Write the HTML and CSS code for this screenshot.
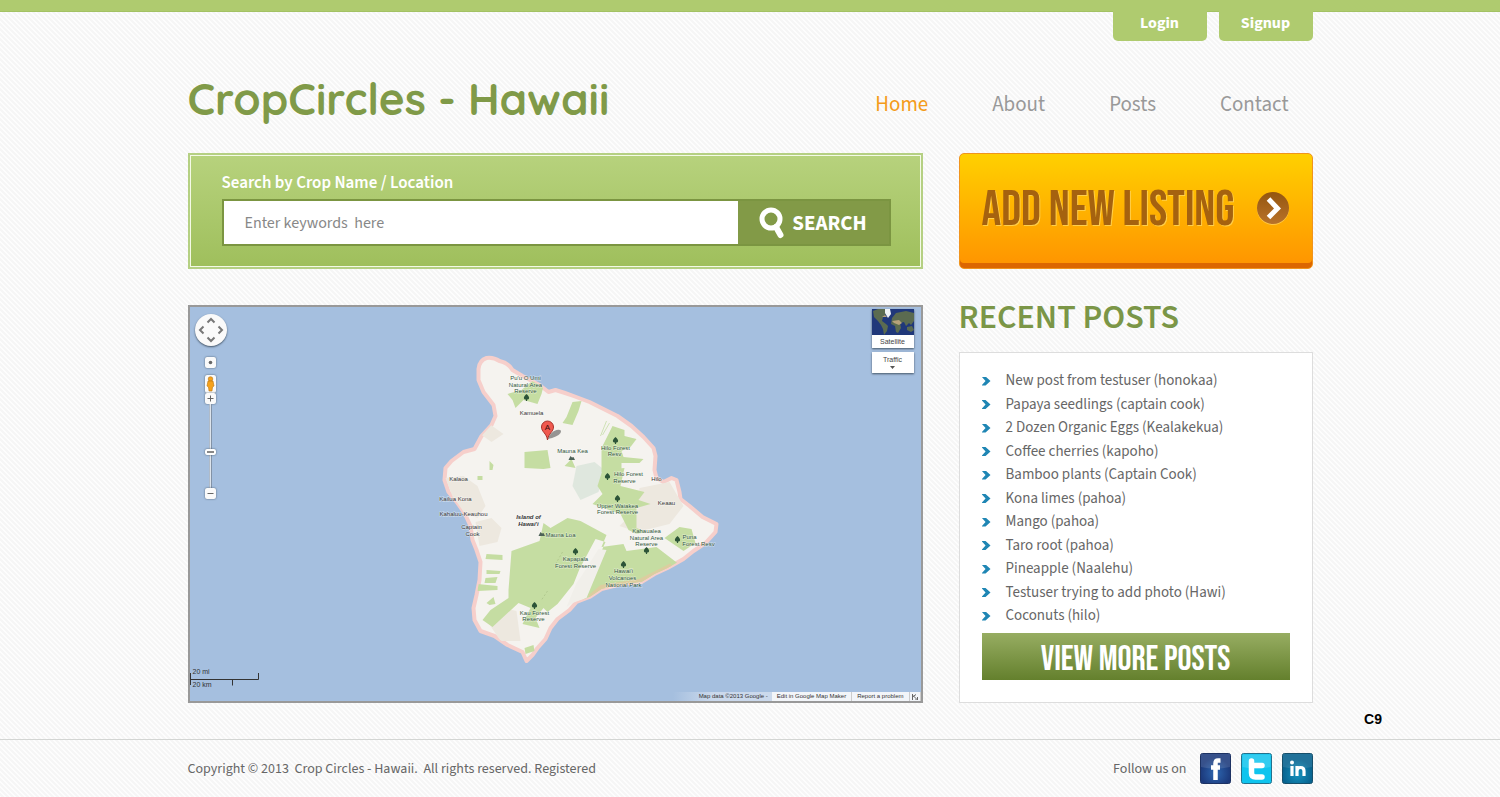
FILE: index.html
```html
<!DOCTYPE html>
<html lang="en">
<head>
  <meta charset="UTF-8">
  <title>CropCircles - Hawaii</title>
  <meta name="viewport" content="width=device-width, initial-scale=1.0">
  <link rel="stylesheet" href="styles.css">
</head>
<body>
  <div class="topbar"></div>
  <header class="container">
    <div class="account">
      <a href="#login">Login</a>
      <a href="#signup">Signup</a>
    </div>
    <div class="masthead">
      <h1>CropCircles - Hawaii</h1>
      <nav>
        <a class="active" href="#home">Home</a>
        <a href="#about">About</a>
        <a href="#posts">Posts</a>
        <a href="#contact">Contact</a>
      </nav>
    </div>
  </header>

  <main class="container">
    <form class="search">
      <label for="keywords">Search by Crop Name / Location</label>
      <div class="search-row">
        <input type="text" id="keywords" placeholder="Enter keywords&nbsp; here">
        <button type="submit">
          <svg width="26" height="32" viewBox="0 0 26 32"><circle cx="12" cy="12" r="9" fill="none" stroke="#fff" stroke-width="5"/><path d="M17 20l4.500 8" stroke="#fff" stroke-width="6" stroke-linecap="round"/></svg>
          SEARCH
        </button>
      </div>
    </form>

    <a class="add-listing" href="#add">
      <span>ADD NEW LISTING</span>
      <svg width="34" height="34" viewBox="0 0 34 34">
        <defs><linearGradient id="disc" x1="0" y1="0" x2="0" y2="1"><stop offset="0" stop-color="#94560f"/><stop offset="1" stop-color="#b9722a"/></linearGradient></defs>
        <circle cx="17" cy="18" r="16" fill="#ffc846"/>
        <circle cx="17" cy="17" r="16" fill="url(#disc)"/>
        <path d="M12.500 8l9 9.500-9 9" fill="none" stroke="#fff" stroke-width="5"/>
      </svg>
    </a>

    <section class="map">
      <svg class="map-canvas" viewBox="190 307 732 394" preserveAspectRatio="xMidYMid slice">
        <defs>
          <path id="tree" d="M0-4c2 2 3 3 2.500 4.500C2.200 1.500 1 1.500.6 1.400V3h-1.200V1.400C-1 1.500-2.200 1.500-2.500.5-3-1-2-2 0-4z" fill="#2c5438"/>
          <path id="peak" d="M-3 2l2-4 1.500 1.500L2-1l1.500 3z" fill="#4d6257"/>
          <path id="island" d="M479 369Q480 360 487 358Q494 357 500 361Q509 363 513 370L523 376 540 385 549 392 556 390Q566 393 574 396L590 402 604 409 618 416 632 426 644 437 654 448 656 456 655 470 657 478 664 482 672 478 677 480 680 492 681 499 690 506 703 517 717 524 716 532 706 543 694 551 684 559 668 568 655 574 642 582 622 584 602 589 590 597 577 602 570 610 558 619 551 628 546 639 538 648 533 655 527 661 523 652 508 645 495 636 481 631 475 620 474 608 477 595 480 580 481 562 477 550 473 540 471 526 465 513 458 503 449 492 445 480 446 468 452 461 464 452 475 449 482 436 492 425 496 416 494 405 484 392 479 380z"/>
          <clipPath id="coast"><use href="#island"/></clipPath>
        </defs>
        <rect x="-400" y="-200" width="2000" height="1400" fill="#a5bfdf"/>
        <use href="#island" fill="#f5f3ef" stroke="#f6cfcb" stroke-width="4" stroke-linejoin="round"/>
        <g clip-path="url(#coast)">
          <g fill="#ede8df">
            <path d="M446 478l18-2 14 10 8 20-8 12-20-8z"/>
            <path d="M476 522l16-4 10 10-4 14-18 4z"/>
            <path d="M478 432l12-8 14 10-12 8z"/>
            <path d="M505 608l12 3 4 30-20 0-12-18z"/>
            <path d="M640 488l30-6 14 24-14 18-32 8-18-6 18-18z"/>
          </g>
          <path d="M577 466l18-4 10 8-6 22-18 8-8-14z" fill="#dfe7de"/>
          <g fill="#c5dda2">
            <path d="M508 394l14-4 12-10 10 6-2 8-4 10-14-4-8 8-3-8z"/>
            <path d="M573 402l9-1-3 10-6 14-10-2 4-6z"/>
            <path d="M525 452l23-2 3 18-7 1-19-1z"/>
            <path d="M548 452l2 16-9-4zM565 466l7-7 4 9zM478 476h5v4h-5zM490 461l4 4-1 5h-3z"/>
            <path d="M613 426l12 4 0 6 12 3-6 8-9 4 2 6 20 2-4 4-18 0 0 9-20 0 0-24 6-12z"/>
            <path d="M603 470l22-2-4 18 24 6-6 8 12 4-14 4 0 20 10 4-10 2-8-4-8-16-28-10 10-10-5-8z"/>
            <path d="M512 551l28-10 4-18 7 5 17-10 13 3 26 14-5 12 22-3 3 7 30-4 26 20-14 10-15 8-70 15 0-8 22-50-10-3-16 30-6 15-16 20-10 8-4-4-8 10 4 10-17-4 8-16-12-5-26 24-10-7 8-10 18-12 0-8z"/>
            <path d="M665 538l15-11 12 2 4 14-12 8z"/>
            <path d="M487 554l16 1v5l-17-1zM487 570l14 1-1 3h-13zM486 578l12-1-2 6h-11zM478 584l20 2v4l-20 1zM487 603l7-6 2 7-6 1zM525 648l9-3 1 6-9 3z"/>
          </g>
          <path d="M590 597l12-10 38-6 32-16" fill="none" stroke="#dccd9f" stroke-width="4"/>
          <path d="M599 549l8 1-20 48-14 5-6 4 10-24 5-7z" fill="#f1efea"/>
          <path d="M607 421l-6 15m9-13l-7 12" stroke="#cfe2b6"/>
          <path d="M548 591l-6 9m21-48l-8 14m60 6l16-1" stroke="#b2c98f" stroke-dasharray="2 2"/>
        </g>
        <g class="park">
          <text x="526" y="380">Pu'u O Umi</text><text x="526" y="387">Natural Area</text><text x="526" y="393">Reserve</text>
          <text x="573" y="453">Mauna Kea</text>
          <text x="616" y="450">Hilo Forest</text><text x="615" y="456">Resv</text>
          <text x="629" y="476">Hilo Forest</text><text x="625" y="483">Reserve</text>
          <text x="618" y="508">Upper Waiakea</text><text x="618" y="514">Forest Reserve</text>
          <text x="647" y="533">Kahaualea</text><text x="647" y="540">Natural Area</text><text x="647" y="546">Reserve</text>
          <text x="690" y="539">Puna</text><text x="699" y="546">Forest Resv</text>
          <text x="561" y="537">Mauna Loa</text>
          <text x="576" y="561">Kapapala</text><text x="576" y="568">Forest Reserve</text>
          <text x="624" y="573">Hawai'i</text><text x="623" y="580">Volcanoes</text><text x="624" y="587">National Park</text>
          <text x="535" y="615">Kau Forest</text><text x="534" y="621">Reserve</text>
        </g>
        <g class="town">
          <text x="532" y="415">Kamuela</text><text x="459" y="481">Kalaoa</text><text x="456" y="501">Kailua Kona</text>
          <text x="464" y="516">Kahaluu-Keauhou</text><text x="472" y="529">Captain</text><text x="473" y="536">Cook</text>
          <text x="657" y="481">Hilo</text><text x="667" y="505">Keaau</text>
          <text class="isle" x="529" y="519">Island of</text><text class="isle" x="529" y="526">Hawai'i</text>
        </g>
        <use href="#tree" x="527" y="398"/><use href="#tree" x="616" y="441"/><use href="#tree" x="608" y="477"/>
        <use href="#tree" x="618" y="499"/><use href="#tree" x="678" y="540"/><use href="#tree" x="576" y="552"/>
        <use href="#tree" x="624" y="565"/><use href="#tree" x="535" y="606"/><use href="#tree" x="647" y="551"/>
        <use href="#peak" x="572" y="458"/><use href="#peak" x="542" y="534"/>
        <path d="M548 439q3-7 9-9 6-1 4 3-3 4-13 6z" fill="#555" opacity=".6"/>
        <path d="M548 440c-1-7-6-8-6-13a6 6 0 0 1 12 0c0 5-5 6-6 13z" fill="#f0594f" stroke="#a8322c"/>
        <text class="pin" x="548" y="430">A</text>
      </svg>

      <div class="map-controls">
        <button class="pan" aria-label="Pan map"><svg width="32" height="32" viewBox="0 0 32 32"><path d="M12.500 8.500L16 5l3.500 3.500M12.500 23.500L16 27l3.500-3.500M8.500 12.500L5 16l3.500 3.500M23.500 12.500L27 16l-3.500 3.500" fill="none" stroke="#777" stroke-width="2"/></svg></button>
        <button class="knob center" aria-label="Center map"><svg width="9" height="9" viewBox="0 0 9 9"><circle cx="4.500" cy="4.500" r="1.800" fill="#666"/></svg></button>
        <button class="knob pegman" aria-label="Street view"><svg width="9" height="16" viewBox="0 0 9 16"><circle cx="4.500" cy="3" r="2.300" fill="#f6a21b" stroke="#b87410" stroke-width=".6"/><path d="M2 5h5l1 5-1.500 1-.5 4H3l-.5-4L1 10z" fill="#f6a21b" stroke="#b87410" stroke-width=".6"/></svg></button>
        <button class="knob" aria-label="Zoom in"><svg width="9" height="9" viewBox="0 0 9 9"><path d="M1.500 4.500h6M4.500 1.500v6" stroke="#666"/></svg></button>
        <input class="zoom" type="range" min="0" max="19" value="11" aria-label="Zoom level">
        <button class="knob" aria-label="Zoom out"><svg width="9" height="9" viewBox="0 0 9 9"><path d="M1.500 4.500h6" stroke="#666"/></svg></button>
      </div>

      <div class="map-types">
        <button class="satellite">
          <svg width="42" height="26" viewBox="0 0 42 26">
            <path fill="#20387a" d="M0 0h42v26H0z"/>
            <path d="M1 2l5-2h7l1 5-3 3-1 4 4 3 2 2-1 5-3 4-1-6-2-4-3-4-4-4zM20 9l4-5 10-2 8 2v8l-3 4-2-2-3 3-2-4-4 1 1 5-3 5-2-1-1-6-4-2zM35 18l5-1 2 4-3 2-4-2z" fill="#5b6b50"/>
            <path d="M20 12l7-1 3 3-3 2-5-2zM10 8l3-2 2 2z" fill="#b6a27a"/><path d="M13 0h5l1 5-3 4-3-5z" fill="#eef2f5"/>
          </svg>
          <span>Satellite</span>
        </button>
        <button class="traffic">Traffic<svg width="5" height="3" viewBox="0 0 5 3"><path d="M0 0h5L2.500 3z" fill="#555"/></svg></button>
      </div>

      <div class="scale"><span>20 mi</span><svg width="70" height="13" viewBox="0 0 70 13"><path d="M.5 0v12M.5 6.500h68V0M42.500 6.500v6" fill="none" stroke="#333"/></svg><span>20 km</span></div>
      <div class="credits">
        <span>Map data ©2013 Google -</span>
        <a href="#edit">Edit in Google Map Maker</a>
        <a href="#report">Report a problem</a>
        <a href="#expand" aria-label="Expand map"><svg width="6" height="6" viewBox="0 0 6 6"><path d="M.5 0v6M.5 3L4 .5M1 1.500l4 4M5.500 3v3H3" fill="none" stroke="#666"/></svg></a>
      </div>
    </section>

    <aside class="recent">
      <h2>RECENT POSTS</h2>
      <div class="panel">
        <ul>
          <li><a href="#p1">New post from testuser (honokaa)</a></li>
          <li><a href="#p2">Papaya seedlings (captain cook)</a></li>
          <li><a href="#p3">2 Dozen Organic Eggs (Kealakekua)</a></li>
          <li><a href="#p4">Coffee cherries (kapoho)</a></li>
          <li><a href="#p5">Bamboo plants (Captain Cook)</a></li>
          <li><a href="#p6">Kona limes (pahoa)</a></li>
          <li><a href="#p7">Mango (pahoa)</a></li>
          <li><a href="#p8">Taro root (pahoa)</a></li>
          <li><a href="#p9">Pineapple (Naalehu)</a></li>
          <li><a href="#p10">Testuser trying to add photo (Hawi)</a></li>
          <li><a href="#p11">Coconuts (hilo)</a></li>
        </ul>
        <a class="more" href="#more">VIEW MORE POSTS</a>
      </div>
    </aside>
  </main>

  <div class="page-code">C9</div>

  <footer>
    <div class="container footer-row">
      <p>Copyright © 2013&nbsp; Crop Circles - Hawaii.&nbsp; All rights reserved. Registered</p>
      <div class="social">
        <span>Follow us on</span>
        <a href="#facebook" aria-label="Facebook"><svg width="31" height="31" viewBox="0 0 31 31">
          <defs><radialGradient id="fb" cy=".65"><stop offset="0" stop-color="#2d66b0"/><stop offset="1" stop-color="#1c3a7c"/></radialGradient></defs>
          <rect x=".5" y=".5" width="30" height="30" rx="2" fill="url(#fb)" stroke="#1d3263"/>
          <path d="M1 1h29v13q-15 3-29 0z" fill="#fff" opacity=".12"/>
          <path d="M20.500 7.500H18q-2.500 0-2.500 3V27M11 14.500h9" fill="none" stroke="#fff" stroke-width="4.500"/></svg></a>
        <a href="#twitter" aria-label="Twitter"><svg width="31" height="31" viewBox="0 0 31 31">
          <rect x=".5" y=".5" width="30" height="30" rx="2" fill="#0fc4ee" stroke="#22728e"/>
          <path d="M1.500 1.500h28V14q-14 3-28 0z" fill="#fff" opacity=".15"/>
          <path d="M10.500 8v12q0 4 4 4H21M10.500 12.500H21" fill="none" stroke="#fff" stroke-width="5.500" stroke-linecap="round"/></svg></a>
        <a href="#linkedin" aria-label="LinkedIn"><svg width="31" height="31" viewBox="0 0 31 31">
          <defs><radialGradient id="li" cy=".7"><stop offset="0" stop-color="#1591bd"/><stop offset="1" stop-color="#08638f"/></radialGradient></defs>
          <rect x=".5" y=".5" width="30" height="30" rx="2" fill="url(#li)" stroke="#164f6b"/>
          <path d="M1 1h29v13q-15 3-29 0z" fill="#fff" opacity=".1"/>
          <circle cx="10" cy="9.500" r="2" fill="#fff"/>
          <path d="M10 13v10M15 13v10M15 18q0-3.500 3.500-3.500T22 18v5" fill="none" stroke="#fff" stroke-width="3.200"/></svg></a>
      </div>
    </div>
  </footer>
</body>
</html>
```
FILE: styles.css
```css
* {
  box-sizing: border-box;
}
body {
  margin: 0;
  background: #fbfbfb linear-gradient(45deg, #f6f6f6 25%, #fdfdfd 25%, #fdfdfd 50%, #f6f6f6 50%, #f6f6f6 75%, #fdfdfd 75%);
  background-size: 5px 5px;
  font-family: 'Myriad Pro', 'Source Sans Pro', 'Source Sans 3', Lato, 'Open Sans', sans-serif;
  font-size: 15px;
  color: #666;
}
a {
  color: inherit;
  text-decoration: none;
}
button {
  font: inherit;
  border: 0;
  padding: 0;
  cursor: pointer;
}
svg {
  display: block;
}
.container {
  width: 75%;
  min-width: 980px;
  margin: 0 auto;
}
.topbar {
  height: 12px;
  background: #afcb6f;
  border-bottom: 1px solid #a3c264;
}

/* header */
.account {
  display: flex;
  justify-content: flex-end;
  gap: 12px;
  margin-top: -1px;
}
.account a {
  width: 94px;
  height: 30px;
  line-height: 24px;
  text-align: center;
  font-size: 16px;
  font-weight: bold;
  color: #fff;
  background: #afcb6f;
  border-radius: 0 0 5px 5px;
}
.masthead {
  display: flex;
  justify-content: space-between;
  align-items: center;
  height: 112px;
  padding: 2px 24px 0 0;
}
h1 {
  margin: 0;
  font-family: 'Century Gothic', 'URW Gothic', Quicksand, Lato, sans-serif;
  font-size: 44px;
  font-weight: bold;
  color: #809a48;
}
nav {
  display: flex;
  gap: 64px;
  padding-top: 12px;
  font-size: 21px;
  color: #999;
}
nav .active {
  color: #f49b1a;
}

main {
  display: grid;
  grid-template-columns: minmax(0, 735fr) minmax(0, 354fr);
  gap: 36px;
}

/* search */
.search {
  height: 116px;
  padding: 17px 30px 0 32px;
  border: 2px solid #b5d083;
  background: linear-gradient(#b7d27d, #9fbf5c);
  box-shadow: inset 0 0 0 1px #f4fae6;
}
.search label {
  display: block;
  line-height: 22px;
  font-size: 17px;
  font-weight: 600;
  color: #fff;
}
.search-row {
  display: flex;
  height: 47px;
  margin-top: 5px;
  border: 2px solid #7b9541;
  background: #829a47;
}
.search input {
  flex: 1;
  min-width: 0;
  padding: 0 21px;
  border: 0;
  background: #fff;
  font: inherit;
  font-size: 16px;
  color: #666;
}
.search input::placeholder {
  color: #888;
  opacity: 1;
}
.search button {
  display: flex;
  align-items: center;
  justify-content: center;
  gap: 7px;
  width: 151px;
  background: none;
  font-size: 21px;
  font-weight: bold;
  color: #fff;
}

.add-listing {
  display: flex;
  align-items: center;
  justify-content: space-between;
  height: 116px;
  padding: 0 22px 7px;
  border: 1px solid #f0941d;
  border-radius: 5px;
  background: linear-gradient(#ffd000, #ff9300);
  box-shadow: inset 0 -5px 0 #dc6600;
  font-family: 'Bebas Neue', 'Roboto Condensed', Roboto, sans-serif;
  font-size: 49px;
  color: #a5620f;
  text-shadow: 1px 1px 0 #ffcf4a;
  white-space: nowrap;
}
.add-listing span {
  padding-top: 6px;
}

/* map */
.map {
  position: relative;
  aspect-ratio: 735 / 398;
  border: 2px solid #999;
  overflow: hidden;
  font: 7px 'Liberation Sans', Arial, sans-serif;
  color: #333;
}
.map-canvas {
  width: 100%;
  height: 100%;
}
.map-canvas text {
  font-size: 6px;
  text-anchor: middle;
  paint-order: stroke;
  stroke: #fff;
  stroke-width: 1px;
  stroke-opacity: .5;
}
.park text {
  fill: #2f5439;
}
.town text {
  fill: #333;
}
.map-canvas .isle {
  font-weight: bold;
  font-style: italic;
}
.map-canvas .pin {
  font-size: 8px;
  stroke: none;
  fill: #3a0c0a;
}
.map-controls {
  position: absolute;
  top: 7px;
  left: 5px;
  display: flex;
  flex-direction: column;
  align-items: center;
}
.pan {
  width: 32px;
  height: 32px;
  border-radius: 50%;
  background: #fafafa;
  box-shadow: 0 1px 2px #456;
}
.knob {
  display: flex;
  align-items: center;
  justify-content: center;
  width: 11px;
  height: 11px;
  border-radius: 2px;
  background: #fafafa;
  box-shadow: 0 0 2px #456;
}
.center {
  margin: 11px 0 7px;
}
.pegman {
  height: 18px;
}
.zoom {
  appearance: none;
  writing-mode: vertical-lr;
  width: 11px;
  height: 84px;
  margin: 0;
  background: linear-gradient(90deg, transparent 4px, #8292a6 4px, #dde4ec 5px, #dde4ec 6px, #8292a6 6px, #8292a6 7px, transparent 7px);
}
.zoom::-webkit-slider-thumb {
  appearance: none;
  width: 11px;
  height: 6px;
  border: 2px solid #fff;
  border-radius: 2px;
  background: #888;
  box-shadow: 0 0 2px #456;
}
.map-types {
  position: absolute;
  top: 2px;
  right: 7px;
  display: grid;
  gap: 4px;
  width: 42px;
}
.map-types button {
  background: #fff;
  color: #444;
  box-shadow: 0 1px 2px #456;
  overflow: hidden;
}
.satellite span {
  display: block;
  line-height: 13px;
}
.traffic {
  height: 21px;
}
.traffic svg {
  margin: 3px auto 0;
}
.scale {
  position: absolute;
  bottom: 13px;
  left: 0;
  line-height: 7px;
}
.scale span {
  display: block;
  padding-left: 3px;
}
.scale svg {
  margin: -2px 0 -5px;
}
.credits {
  position: absolute;
  right: 0;
  bottom: 0;
  display: flex;
  line-height: 9px;
  font-size: 6px;
}
.credits span {
  padding: 0 4px 0 26px;
  background: linear-gradient(90deg, transparent, #cbd9ec 40px);
}
.credits a {
  display: flex;
  align-items: center;
  padding: 0 5px;
  border-right: 1px solid #ccc;
  background: #f2f5f9;
}
.credits a:last-child {
  padding: 0 2px;
}

/* recent posts */
.recent {
  display: flex;
  flex-direction: column;
}
h2 {
  margin: 0 0 21px;
  line-height: 26px;
  font-size: 34px;
  font-weight: 600;
  color: #7b9647;
}
.panel {
  flex: 1;
  display: flex;
  flex-direction: column;
  gap: 7px;
  padding: 18px 22px 22px;
  border: 1px solid #ddd;
  background: #fff;
}
.panel ul {
  flex: 1;
  display: flex;
  flex-direction: column;
  justify-content: space-between;
  margin: 0;
  padding: 0;
  list-style: none;
}
.panel li {
  display: flex;
  align-items: center;
  gap: 15px;
  line-height: 20px;
}
.panel li::before {
  content: '';
  width: 9px;
  height: 9px;
  background: #1f86b4;
  clip-path: polygon(0 0, 45% 0, 100% 50%, 45% 100%, 0 100%, 45% 50%);
}
.more {
  height: 47px;
  line-height: 53px;
  text-align: center;
  background: linear-gradient(#97ad62, #64802d);
  font-family: 'Bebas Neue', 'Roboto Condensed', Roboto, sans-serif;
  font-size: 35px;
  color: #fff;
}

/* footer */
.page-code {
  padding-right: 118px;
  margin-bottom: 3px;
  text-align: right;
  font: bold 14px/33px 'Liberation Sans', Arial, sans-serif;
  color: #000;
}
footer {
  border-top: 1px solid #d3d5d3;
  font-size: 14px;
}
.footer-row {
  display: flex;
  align-items: center;
  justify-content: space-between;
  height: 57px;
}
.footer-row p {
  margin: 0;
}
.social {
  display: flex;
  align-items: center;
  gap: 10px;
}
.social span {
  padding-right: 3px;
}
```
